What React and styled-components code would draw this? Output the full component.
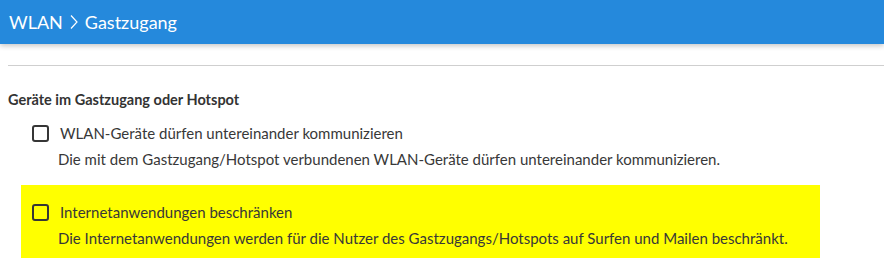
import React from "react";
import styled, { createGlobalStyle } from "styled-components";

const GlobalStyle = createGlobalStyle`
  html, body { margin: 0; padding: 0; background: #ffffff; }
  body { font-family: Lato, "Noto Sans", sans-serif; color: #3c3c3c; }
`;

const Header = styled.header`
  height: 44px;
  background: #2589dc;
  box-shadow: 0 2px 5px rgba(0, 0, 0, 0.22);
  display: flex;
  align-items: center;
  padding-left: 9px;
  color: #ffffff;
  font-size: 18px;
  gap: 6px;
`;

const Crumb = styled.span`
  line-height: 1;
`;

const Chevron = styled.svg`
  width: 8px;
  height: 16px;
  margin: 0 1px;
`;

const Main = styled.main`
  padding-left: 8px;
`;

const Divider = styled.hr`
  margin: 21px 0 0 0;
  border: 0;
  border-top: 1px solid #cfcfcf;
`;

const SectionTitle = styled.h2`
  margin: 25px 0 0 0;
  font-size: 14.5px;
  line-height: 18px;
  font-weight: 700;
  color: #333333;
`;

const OptionList = styled.div`
  display: flex;
  flex-direction: column;
  gap: 6px;
  margin-top: -3px;
  margin-left: 13px;
`;

const Option = styled.div`
  width: 799px;
  box-sizing: border-box;
  padding: 18px 11px 10px 11px;
  background: ${(p) => (p.$highlight ? "#ffff00" : "transparent")};
`;

const Row = styled.label`
  display: flex;
  align-items: center;
  gap: 11px;
  height: 18px;
`;

const Box = styled.span`
  width: 17px;
  height: 17px;
  box-sizing: border-box;
  border: 2px solid #363636;
  border-radius: 3px;
  flex: none;
`;

const Label = styled.span`
  font-size: 15px;
  line-height: 18px;
  color: #383838;
`;

const Description = styled.div`
  margin-top: 7px;
  padding-left: 26px;
  font-size: 15px;
  line-height: 20px;
  color: #383838;
`;

const options = [
  {
    label: "WLAN-Geräte dürfen untereinander kommunizieren",
    desc: "Die mit dem Gastzugang/Hotspot verbundenen WLAN-Geräte dürfen untereinander kommunizieren.",
    highlight: false,
  },
  {
    label: "Internetanwendungen beschränken",
    desc: "Die Internetanwendungen werden für die Nutzer des Gastzugangs/Hotspots auf Surfen und Mailen beschränkt.",
    highlight: true,
  },
];

export default function App() {
  return (
    <>
      <GlobalStyle />
      <Header>
        <Crumb>WLAN</Crumb>
        <Chevron viewBox="0 0 8 16">
          <path d="M1 1.5 L7 8 L1 14.5" fill="none" stroke="#ffffff" strokeWidth="1.2" />
        </Chevron>
        <Crumb>Gastzugang</Crumb>
      </Header>
      <Main>
        <Divider />
        <SectionTitle>Geräte im Gastzugang oder Hotspot</SectionTitle>
        <OptionList>
          {options.map((o) => (
            <Option key={o.label} $highlight={o.highlight}>
              <Row>
                <Box />
                <Label>{o.label}</Label>
              </Row>
              <Description>{o.desc}</Description>
            </Option>
          ))}
        </OptionList>
      </Main>
    </>
  );
}
